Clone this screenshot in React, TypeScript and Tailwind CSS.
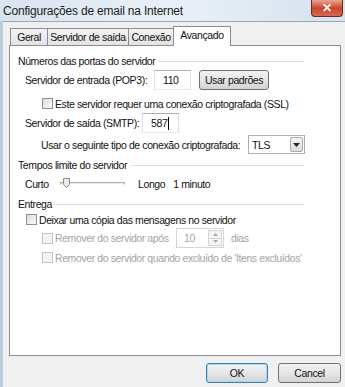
import React from "react";

const font = { fontFamily: '"Liberation Sans", Arial, sans-serif' };

function Header({ title }: { title: string }) {
  return (
    <div className="flex h-[14px] items-center pl-2 pr-[36px]">
      <span className="whitespace-nowrap">{title}</span>
      <div className="ml-[4px] h-px flex-1 bg-[#d5dfe5]" />
    </div>
  );
}

function Check({ disabled }: { disabled?: boolean }) {
  return (
    <span
      className={
        "inline-block h-[11px] w-[11px] shrink-0 border " +
        (disabled
          ? "border-[#c5c5c5] bg-[#f4f4f4]"
          : "border-[#8f8f8f] bg-gradient-to-br from-[#dcdcdc] to-[#fafafa]")
      }
    />
  );
}

function Field({ value, width, cursor }: { value: string; width: string; cursor?: boolean }) {
  return (
    <div
      className={
        "flex h-[20px] shrink-0 items-center border border-[#abadb3] border-l-[#e2e3ea] border-r-[#dbdfe6] border-b-[#e3e9ef] bg-white pl-[8px] " +
        width
      }
    >
      <span>{value}</span>
      {cursor && <span className="ml-px inline-block h-[13px] w-px bg-black" />}
    </div>
  );
}

function Btn({ label, def, cls }: { label: string; def?: boolean; cls: string }) {
  return (
    <div
      className={
        "flex shrink-0 items-center justify-center whitespace-nowrap rounded-[3px] border bg-gradient-to-b from-[#f2f2f2] via-[#e6e6e6] to-[#d3d3d3] " +
        (def ? "border-[#3c7fb1] shadow-[inset_0_0_0_1px_#a6d8f2] " : "border-[#707070] ") +
        cls
      }
    >
      {label}
    </div>
  );
}

const tab =
  "flex h-[17px] shrink-0 items-center justify-center whitespace-nowrap border border-b-0 border-[#898c95] bg-gradient-to-b from-[#f3f3f3] to-[#e3e3e3]";

export default function App() {
  return (
    <div
      style={font}
      className="flex h-[387px] w-[345px] flex-col overflow-hidden whitespace-nowrap bg-[#b9cde0] text-[10.5px] leading-[14px] tracking-[-0.4px] text-[#111]"
    >
      {/* title bar */}
      <div className="flex h-[21px] shrink-0 items-start justify-between bg-gradient-to-r from-[#d8e4f0] via-[#e9f0f7] to-[#d6e2ee]">
        <span className="pl-[3px] pt-[4px] text-[12px] tracking-[-0.2px] text-[#1c1c1c]">
          Configurações de email na Internet
        </span>
        <div className="mr-[2px] flex h-[17px] w-[32px] items-center justify-center rounded-b-[4px] border border-t-0 border-[#6b2a22] bg-gradient-to-b from-[#e8a593] via-[#c9452d] to-[#d5684f] text-[12px] font-bold tracking-normal text-white">
          ✕
        </div>
      </div>

      {/* body */}
      <div className="ml-[3px] flex flex-1 flex-col border-t border-[#9aa7b5] bg-[#f0f0f0] pl-[6px] pr-[4px]">
        {/* tabs */}
        <div className="mt-[4px] flex h-[19px] items-end pl-[1px]">
          <div className={tab + " w-[38px]"}>Geral</div>
          <div className={tab + " ml-[-1px] w-[82px]"}>Servidor de saída</div>
          <div className={tab + " ml-[-1px] w-[46px]"}>Conexão</div>
          <div className="relative z-10 mb-[-1px] ml-[-1px] flex h-[20px] w-[58px] items-start justify-center border border-b-0 border-[#898c95] bg-white pt-[1px]">
            Avançado
          </div>
        </div>

        {/* panel */}
        <div className="flex h-[311px] flex-col border border-[#898c95] bg-white pt-[8px]">
          <Header title="Números das portas do servidor" />

          <div className="mt-[2px] flex h-[20px] items-center pl-[15px]">
            <span className="w-[129px]">Servidor de entrada (POP3):</span>
            <Field value="110" width="w-[37px]" />
            <Btn label="Usar padrões" cls="ml-[8px] h-[20px] w-[70px]" />
          </div>

          <div className="mt-[7px] flex h-[13px] items-center gap-[2px] pl-[32px]">
            <Check />
            <span>Este servidor requer uma conexão criptografada (SSL)</span>
          </div>

          <div className="mt-[3px] flex h-[20px] items-center pl-[15px]">
            <span className="w-[117px]">Servidor de saída (SMTP):</span>
            <Field value="587" width="w-[37px]" cursor />
          </div>

          <div className="mt-[2px] flex h-[19px] items-center pl-[31px]">
            <span className="w-[207px]">Usar o seguinte tipo de conexão criptografada:</span>
            <div className="flex h-[19px] w-[57px] shrink-0 items-center border border-[#abadb3] bg-white pl-[3px]">
              <span className="flex-1">TLS</span>
              <div className="mr-px flex h-[15px] w-[13px] items-center justify-center rounded-[2px] border border-[#a9a9a9] bg-gradient-to-b from-[#f5f5f5] to-[#dcdcdc]">
                <svg width="7" height="4" viewBox="0 0 7 4">
                  <path d="M0 0h7L3.5 4z" fill="#222" />
                </svg>
              </div>
            </div>
          </div>

          <div className="mt-[4px]">
            <Header title="Tempos limite do servidor" />
          </div>

          <div className="mt-[4px] flex h-[16px] items-center pl-[15px]">
            <span className="w-[35px]">Curto</span>
            <div className="relative h-[12px] w-[65px] shrink-0">
              <div className="absolute left-0 right-0 top-[4px] h-[3px] border border-[#b0b0b0] border-b-white bg-[#e7eaea]" />
              <svg className="absolute left-[3px] top-0" width="7" height="10" viewBox="0 0 7 10">
                <path d="M0.5 0.5h6v6l-3 3l-3-3z" fill="#eaeaea" stroke="#8a8a8a" />
              </svg>
            </div>
            <span className="ml-[13px]">Longo</span>
            <span className="ml-[8px]">1 minuto</span>
          </div>

          <div className="mt-[5px]">
            <Header title="Entrega" />
          </div>

          <div className="mt-[2px] flex h-[13px] items-center gap-[2px] pl-[16px]">
            <Check />
            <span>Deixar uma cópia das mensagens no servidor</span>
          </div>

          <div className="mt-[2px] flex h-[20px] items-center pl-[32px] text-[#a3a3a3]">
            <Check disabled />
            <span className="ml-[2px] w-[121px]">Remover do servidor após</span>
            <div className="flex h-[20px] w-[48px] shrink-0 items-center border border-[#d5d5d5] bg-white pl-[7px] pr-px">
              <span className="flex-1">10</span>
              <div className="flex h-[16px] w-[14px] flex-col border border-[#d5d5d5]">
                <div className="flex flex-1 items-center justify-center border-b border-[#d5d5d5] bg-[#f4f4f4]">
                  <svg width="5" height="3" viewBox="0 0 5 3">
                    <path d="M0 3h5L2.5 0z" fill="#aaa" />
                  </svg>
                </div>
                <div className="flex flex-1 items-center justify-center bg-[#f4f4f4]">
                  <svg width="5" height="3" viewBox="0 0 5 3">
                    <path d="M0 0h5L2.5 3z" fill="#aaa" />
                  </svg>
                </div>
              </div>
            </div>
            <span className="ml-[7px]">dias</span>
          </div>

          <div className="mt-[3px] flex h-[13px] items-center gap-[2px] pl-[32px] text-[#a3a3a3]">
            <Check disabled />
            <span>Remover do servidor quando excluído de 'Itens excluídos'</span>
          </div>
        </div>

        {/* buttons */}
        <div className="mt-[7px] flex justify-end gap-[10px]">
          <Btn label="OK" def cls="h-[20px] w-[62px]" />
          <Btn label="Cancel" cls="h-[20px] w-[63px]" />
        </div>
      </div>
    </div>
  );
}
